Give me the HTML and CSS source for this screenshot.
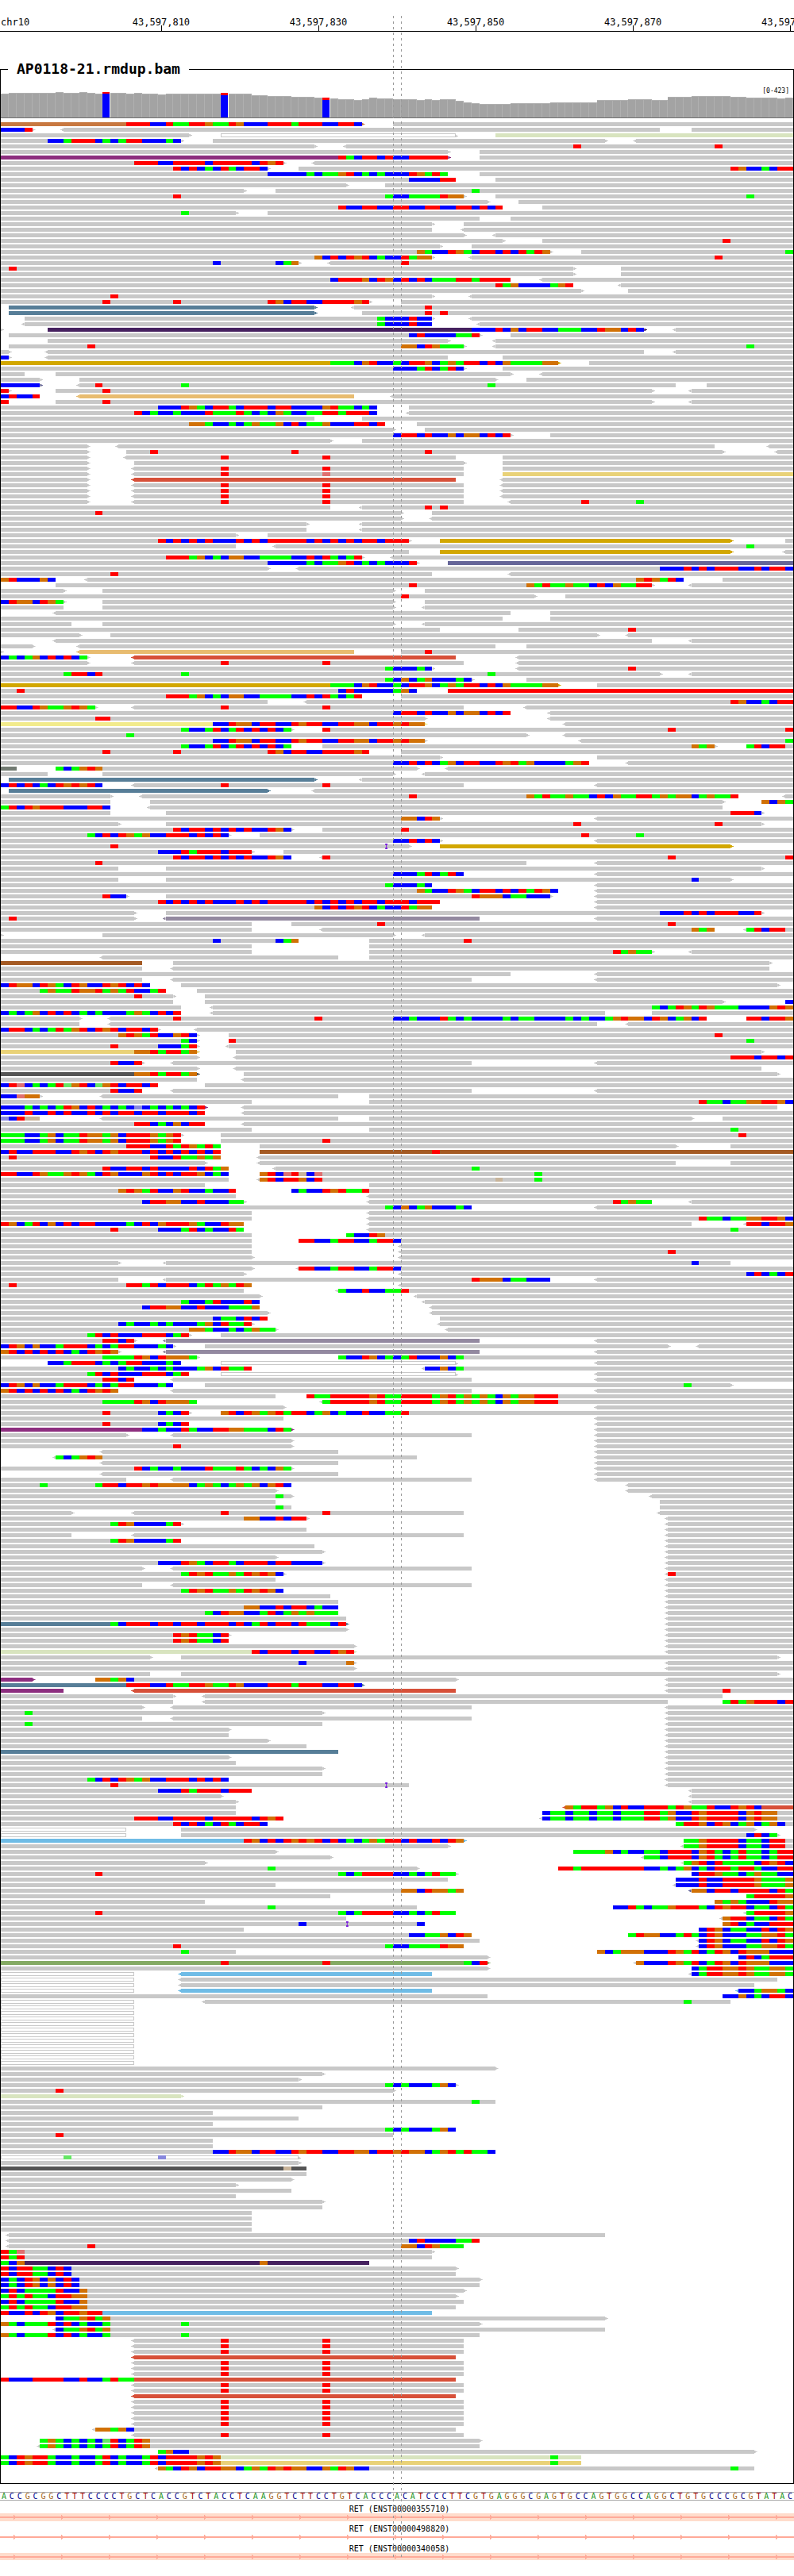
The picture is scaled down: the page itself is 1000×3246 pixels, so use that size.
FILE: index.html
```html
<!DOCTYPE html>
<html lang="en">
<head>
<meta charset="utf-8">
<title>AP0118-21.rmdup.bam</title>
<link rel="stylesheet" href="styles.css">
</head>
<body>
<main class="browser">
  <header class="ruler">
    <span class="chrom">chr10</span>
    <span class="tick" style="grid-column:21">43,597,810</span>
    <span class="tick" style="grid-column:41">43,597,830</span>
    <span class="tick" style="grid-column:61">43,597,850</span>
    <span class="tick" style="grid-column:81">43,597,870</span>
    <span class="tick" style="grid-column:101">43,597,890</span>
  </header>
  <fieldset class="track">
    <legend>AP0118-21.rmdup.bam</legend>
    <div class="coverage" id="coverage"><span class="range">[0-423]</span></div>
    <div class="reads" id="reads"></div>
  </fieldset>
  <div class="sequence" id="sequence"></div>
  <section class="genes">
    <div class="gene">
      <p>RET (ENST00000355710)</p>
      <svg class="strand" width="100%" height="10">
        <defs><pattern id="chevron" x="17" width="60" height="10" patternUnits="userSpaceOnUse"><path d="M0 2H1V3H2V4H3V6H2V7H1V8H0Z" fill="#ffaa99"/></pattern></defs>
        <rect width="100%" height="10" fill="#ffdccc"/><rect y="4" width="100%" height="2" fill="#ffaa99"/><rect width="100%" height="10" fill="url(#chevron)"/>
      </svg>
    </div>
    <div class="gene">
      <p>RET (ENST00000498820)</p>
      <svg class="strand" width="100%" height="10"><rect y="4" width="100%" height="2" fill="#ffaa99"/><rect width="100%" height="10" fill="url(#chevron)"/></svg>
    </div>
    <div class="gene">
      <p>RET (ENST00000340058)</p>
      <svg class="strand" width="100%" height="10"><rect width="100%" height="9" fill="#ffdccc"/><rect y="4" width="100%" height="2" fill="#ffaa99"/><rect width="100%" height="10" fill="url(#chevron)"/></svg>
    </div>
  </section>
  <div class="centre"></div>
</main>
<script src="script.js"></script>
</body>
</html>
```

FILE: styles.css
```css
* { box-sizing: border-box; }

body {
  margin: 0;
  background: #fff;
  color: #000;
  font-family: "DejaVu Sans Mono", "Liberation Mono", monospace;
  font-size: 12px;
}

.browser { position: relative; overflow: hidden; padding-bottom: 19px; }

.ruler, .coverage, .row, .sequence {
  display: grid;
  grid-template-columns: repeat(101, minmax(0, 1fr));
}

.ruler {
  height: 40px;
  padding-top: 21px;
  border-bottom: 1px solid #000;
  line-height: 14px;
}
.chrom { grid-area: 1 / 1 / 2 / 10; padding-left: 1px; }
.tick {
  grid-row: 1;
  justify-self: center;
  position: relative;
  white-space: nowrap;
}
.tick::after {
  content: "";
  position: absolute;
  left: 50%;
  bottom: 0;
  width: 1px;
  height: 7px;
  background: #000;
}

.track {
  margin: 36px 0 0;
  padding: 0 0 16px;
  border: 1px solid #000;
  min-width: 0;
}
.track legend {
  margin-left: 9px;
  padding: 0 11px;
  font-size: 18px;
  font-weight: bold;
  line-height: 22px;
}

.coverage {
  position: relative;
  height: 51px;
  align-items: end;
  border-bottom: 1px solid #707070;
}
.range {
  position: absolute;
  top: 11px;
  right: 5px;
  font-size: 8px;
  line-height: 12px;
}
.bar {
  grid-row: 1;
  background: #a3a3a3;
  border-top: 1px solid #b0b0b0;
  border-right: 1px solid #b0b0b0;
}
.snv { grid-row: 1; background: #00f; border-top: 3px solid #f00; margin-right: 1px; }

.reads { display: grid; grid-auto-rows: 5px; row-gap: 2px; padding-top: 5px; }
.row { grid-template-rows: 5px; }
.row > * { grid-row: 1; }

.read { position: relative; background: var(--c, #c8c8c8); }
.read.empty { width: 0; }
.fwd::after, .rev::before {
  content: "";
  position: absolute;
  top: 0;
  width: 4px;
  height: 5px;
  background: var(--c, #c8c8c8);
}
.fwd::after {
  left: 100%;
  clip-path: polygon(0 1px, 2px 1px, 2px 2px, 4px 2px, 4px 3px, 2px 3px, 2px 4px, 0 4px);
}
.rev::before {
  right: 100%;
  clip-path: polygon(4px 1px, 2px 1px, 2px 2px, 0 2px, 0 3px, 2px 3px, 2px 4px, 4px 4px);
}

.h { background: #fff; border: 1px solid #c8c8c8; }
.o { --c: #c87840; }
.l { --c: #d8e4bf; }
.p { --c: #8d2e7f; }
.b { --c: #577e98; }
.d { --c: #46215f; }
.y { --c: #d2a700; }
.e { --c: #e8bc70; }
.w { --c: #e9d278; }
.r { --c: #d75039; }
.v { --c: #666699; }
.f { --c: #ff0000; }
.q { --c: #f2eb8c; }
.m { --c: #727b72; }
.u { --c: #9389a0; }
.n { --c: #a45a23; }
.k { --c: #555555; }
.c { --c: #6fbce6; }
.j { --c: #84aa63; }

.base { position: relative; }
.A { background: #00ff00; }
.C { background: #0000ff; }
.G { background: #d17105; }
.T { background: #ff0000; }
.fade-a { background: #66e666; }
.fade-c { background: #8888dd; }
.fade-g { background: #c8b49a; }
.fade-t { background: #e07070; }

.ins {
  position: relative;
  width: 3px;
  height: 7px;
  margin-top: -1px;
  background: #7a1fdc;
  clip-path: polygon(0 0, 100% 0, 100% 2px, 2px 2px, 2px 5px, 100% 5px, 100% 100%, 0 100%, 0 5px, 1px 5px, 1px 2px, 0 2px);
}

.sequence {
  margin-top: 10px;
  border: solid #aaa;
  border-width: 1px 0;
  font-size: 10px;
  line-height: 9px;
  text-align: center;
}
.base-A { color: #1f961f; }
.base-C { color: #00008b; }
.base-G { color: #a8681a; }
.base-T { color: #a00000; }

.genes { padding-top: 1px; }
.gene p {
  margin: 0;
  padding: 5px 0 0 6px;
  font-size: 10px;
  line-height: 10px;
  text-align: center;
}
.strand { display: block; }

.centre {
  position: absolute;
  top: 20px;
  bottom: 24px;
  left: 49.5%;
  width: 11px;
  background:
    repeating-linear-gradient(#999 0 3px, transparent 3px 7px) left / 1px 100% no-repeat,
    repeating-linear-gradient(#999 0 3px, transparent 3px 7px) right / 1px 100% no-repeat;
}
```

FILE: script.js
```js
// Bar heights as [columns, height]; a third value is the height of the minor allele cap.
const depth = [[1,30],[6,31],[1,32],[2,31],[1,32],[1,31],[1,30],[1,32,2],[2,31],[1,30],[1,31],[2,30],[1,29],[7,30],
  [1,31,3],[3,30],[2,28],[3,27],[3,26],[1,25],[1,25,3],[1,24],[2,23],[1,22],[1,23],[1,25],[2,24],[3,23],[1,22],[1,23],
  [1,22],[2,23],[1,21],[1,19],[1,18],[4,17],[5,18],[6,19],[4,22],[3,23],[2,22],[3,26],[5,27],[2,26],[4,25],[1,24],[1,25]];

const reference = "ACCGCGGCTTTCCCCTGCTCACCGTCTACCTCAAGGTCTTCCTGTCACCC" +
  "ACATCCCTTCGTGAGGGCGAGTGCCAGTGGCCAGGCTGTGCCCGCGTATAC";

// One line per row. "a-b" is a read over columns a to b, "<" and ">" its strand tip,
// a trailing letter its colour; "n:ACGT" are mismatches from column n; "n|" an insertion.
// "xN " before a line repeats it N times.
const pileup = `
0-46>o 16:TTTCCTAATTGAATGCCCTTTATTTCCTTC 50-101
0-4> 0:CCCT <8-84 88-101
0-24> 28-58>h 63-101l
0-23> 6:CCATTTCACATTCCCAC 27-77> <81-101
0-40> <44-101 73:T 91:T
0-57> 61-101
0-57>p 43:TACTTCTCCTTTTT 61-101
0-36> 17:TTTCCTTTTCTTTTTCTGT <40-101
0-34> 22:TCTCACTACTTC 38-101 93:TGCCACTT
0-57 34:CCCCCACAAGTCACACCCTGATA 61-101
0-58 52:CCCCTT 63-101
0-44> 49-101
0-31> 35-101 60:A
0-59> 22:T 49:ACCAAAATGG 63-101 95:A
0-62> 66-101
0-64 43:TCCTTCCTTCCTTCCTTCTCT 69-101
0-30> 23:A 34-101
0-61 65-101
0-55> 59-101
0-55 <59-101
0-59> <63-101
0-64> 69-101 92:T
0-56> 60-101
0-70> 53:GACCTGACTTCTCTATG 74-101 100:A
0-55> 40:GCTCTGTCACCTAGG <60-101 91:T
0-38> 27:C 35:CAG <42-101 51:T
0-73> 1:T 79-101
0-73> 79-101
0-65 42:CTTTGCTGCTCTCAAATTATTTT <69-101
0-73 63:TAGCCCCAGT <79-101
0-74> 80-101
0-55> 14:T <60-101
0-47> 13:T 22:T 34:TGCTTCCTTTTGT 51-101
1-40>b <45-101 54:T
1-40>b 46-101 54:T 56:T
3-55> 48:ACCCTCC <60-101
<3-55 48:ACCCTCC <61-101
0-0> 6-82>d 60:CCCTCGCTTCCAAACCTGGCTC <86-101
1-61> 52:CTCCCCAAT 65-101
6-57> <63-101
1-59> 11:T 51:GGCTGAAA <63-101 95:A
0-1> <6-82 <86-101
0-1> 0:C <6-57 64-101
0-71>y 42:AAACGTCCACTTGCAGATTCTCGAAAAGG 75-101
0-59> 50:CCCATCATC 64-101
0-3 7-65> <69-101
0-5> 10-63> 67-101
0-5>v 0:CCCCC <10-86 12:T 23:A 62:A 90-101
0-1> 0:T 7-83> 13:T <88-101
0-5 0:CTCCT <10-45e <50-101
0-1 0:T 7-83> 13:T <88-101
0-48 20:CCCTGACTTACTTTCTTCCCCGTAACAC 52-101
0-48 17:TCACCACCCTAAATACACGACCAATTATTTC <52-101
0-40 46-101
0-49 24:GGACCACAGAAGCTCAAGCCCTTCT 53-101
0-50> 54-101
0-65> 50:CTTCTCCGCGGCTCT 70-101
0-42> 46-101
0-11> <15-91 <98-101
0-11> 16-92> 19:T 37:T 54:T <99-101
0-11> <16-58 28:T 41:T 64-101
0-11> 17-59> 64-101
0-11> <17-59 28:T 41:T 64-101
0-11> <17-59 28:T 41:t 64-101w
0-11> <17-58r <64-101
x3 0-11> <17-59 28:T 41:T <64-101
0-11> <17-59 28:T 41:T <65-101 74:T 81:A
0-42 <46-101 54:T 56:T
0-51> 12:T 55-101
0-51> <55-101
0-39> <46-101
0-39 <46-101
0-30> 34-101
0-52> 20:TCTCTCTCCCTCTCTTTTTCTCTCTCTTCTTT 56-93>y 100-101
0-30 <35-101 95:A
0-52 56-93>y <100-101
0-46> 21:TTTAGCACGGCCAAAACCTCTACAT <50-101
0-53> 34:CCCCCACAAGTCACACCCT 57-101v
0-34> <38-101 84:CCCTCTCTTTCCTCTTC
0-55 14:T <65-101
0-7 0:GTCCCGC <11-87 81:GTGATC 92-101
7-83> 52:T 67:GATAAGAACTCGAATT <88-101
0-8> 13-50> 54-101
0-68> 51:T 72-101
0-8> 0:CTGGCTGA 13-50> 54-101
0-8 13-50> <54-101
<7-65 70-101
0-64 70-101
0-9 13-50> <54-101
0-56 66-101 80:T
0-10> 14-76> <80-101
<7-83 <88-101
0-4> <10-63 67-101
0-0> <10-45e 51-101 54:T
0-11> 0:CACAGCTCTCA <17-58r <66-101
0-11> <17-59 28:T 41:T <66-101
0-55> 49:ACCCAC <66-101 80:T
0-84> 8:ATTCT 23:A 62:A <88-101
0-60> 49:ACGCAGCCCAC 67-101
0-71>y 42:AAACGTCCACTTGCAGATTCTCGAAAAGG 76-101
0-53 2:T 43:CTCCCCCAGC 57-101f
0-46 21:TTTAGCACGGCCAAAACCTCTACAT 51-101
0-34 <39-101 93:TGCCACTT
0-12> 0:TTCCTGAAGTGA <17-59 28:T 41:T <67-101
0-65 50:CTTCTCCGCGGCTCT <70-101
0-54> 12:TT <70-101
0-54>q 27:CCTGGCTTCCTGTTCCTTGGCTTGTGG <72-101
0-37> 23:ACCATCATCTCTCA 41-101 41:T 85:T 100:T
0-67> 16:A <72-101
0-54> 27:CCTGGCTTCCTGTTCCTTGGCTTGTGG <74-101 100:A
0-37 23:ACCATCATCTCTCA 41-91> 88:GAG 95-101 95:ATCTT
0-47 13:T 22:T 34:TGCTTCCTTTTGT 51-101
0-56> 76-101
0-75 50:CCTCTCAGCTTCCTGTAGCCCCAGT <80-101
0-2m 7-53> 7:ACAGTG <57-101
0-6 13-50> <54-101
1-40>b <46-101
0-13 0:CTCTCACTGTGTC <17-59 28:T 41:T <76-101
1-34>b <40-101
0-14> <18-94 52:T 67:GATAAGAACTCGAATTAGAGGCAGAAT <100-101
0-14 19-92> 97-101 97:GCGA
0-14 0:ATCTGTTTCCCTTC <19-92
0-14 21-97> 93:TTTC
0-56> 51:GGCTG <76-101
0-15> 21-97> 73:T 91:T
0-37> 22:TCTTCTCTCTCCTGC 41-101 51:T
0-29> 11:ACTCTGAGCCTTTCTCTC 33-101 74:T 81:A
0-56> 50:CCTCTC <76-101
0-52> 14:T 49| 56-93>y
0-32> 20:CCCTATTTCTTT 36-101
0-37 22:TCTTCTCTCTCCTGC <41-101 41:T 85:T 100:T
0-67 12:T <76-101
0-15 21-97>
0-59 50:CCCATCATC <76-101
0-15 21-93> 88:C
0-55 49:ACCCAC <76-101
0-71 53:GACCTGACTTCTCTATGC <76-101
0-16> 13:TCC 21-70> 60:TGGGCAACCC <76-101
0-56 20:TCTCTCTCCCTCTCTTTTTCTCTCTCTTCTTTCTTT <76-101
0-55 40:GCTCTGTCACCTAGG <76-101
0-17> 21-97> 84:CCCTCTCTTTCCT
0-17> 1:T <21-61u <76-101
0-32 37-101 48:T 85:T
0-32 <41-91 88:GAG <95-101 95:ATCTT
0-0> 13-50> <54-101
0-38 27:C 35:CAG 47-101 59:T
0-32 47-101
0-32 47-83> 78:TAGAA <88-101
<13-43 47-101
0-18n 22-98>
0-18 <22-98
0-65 <76-101
0-18 <22-60 <76-101
0-19 0:CTGGCTGACTGCCTGTCTC 23-99>
0-21 5:AGAATGGTAGATCCAT 25-101
0-22> 17:T 26-101
0-22 26-92> 100-101 100:C
0-23 <27-101 83:ACATGATGAAACCCCGTG
0-23 0:CACAGCTCTCACACCCAGACTCT <27-77 83-101
0-10> <14-90 22:T 40:T 50:CCACCCTACACCCCACAACCCCACACCAGTGGCTGCAGCT 95-101 95:TTCTTG
0-10 <14-76 <80-101
0-20> 0:CTTCACATAGTCTGTCTTCT <25-101
0-25> 15:GTGATCCGTC 29-101 91:T
0-25> 23:AC 29-101 29:T 95:A
0-25> 14:T 20:CCCAT <29-101
0-25>w 17:GGTATTAG 30-97>
0-25> <30-101 93:TTTCTTCT
0-18> 14:TCCT <22-60 <76-101
0-25> <30-97
0-25>k 17:GGTATTAG 31-99>
0-25 <31-101
0-20 0:CTtCACATaGTCaGTCTTCT 26-101
0-18 14:TCCT <22-60 <76-101
0-5> 0:CCtGG <13-43 47-101
0-32 47-101 89:TAACAAGGTTGC
0-26>p 0:CCCACACATGCTCACACcCACACACT <31-99
0-26 0:CCCTCCTCTCCTCTCTTCTTCTTTCT <31-101
0-5 0:cCTgg <13-43 47-88> 92-101
0-26 17:TTCACGCTT <31-101
0-32 47-101 93:A
0-23> 0:AAACCAGCAATGGAGCTTTGAGT 28-101 94:T
0-23 0:AAACCAGCAATGGAGCTTTGAGT 28-101 41:T
0-28 16:TTTCCTATGATA 33-86> 93-101
0-28 0:CTCCTTTCCTGTCTGTTTCTCTCTCTCT 33-101n 55:T
0-28 1:T 19:TCCTAAGAG <33-101
0-26> <33-86 93-101
0-29 13:TCCTTCTCCCCTCTAG <35-101 60:A
0-29 0:TTCCTGAAGTGACTGCCCGTCTCTTGCAC 33-101 33:GTCtTgCt 68:A
0-29 <33-101 33:GTCTTGCT 63:g 68:A
0-26 47-101
0-30 15:GTGATCCGTCCACCT 37-101 37:CACCTGTAAT
0-30 <47-101
0-31> 18:CTTGGCCTCCCAA <47-83 78:TAGAA <88-101
0-60 49:ACGCAGCCCAC <76-101
0-32 <47-101
0-32 <47-101 89:TAACAAGGTTGC
0-31 0:TGCATCGCTCTTCCCCACTCGTTTGACCTGG <47-88 <95-101 95:TTCTTG
0-31 14:T 20:CCCATCACCTA <47-101 93:A
0-32 44-101 44:ACCTG
0-32 38-101 38:TTCCATTCCATTC
0-32 <51-101
0-32 <51-101 85:T
0-32> <51-101
0-15> <21-93 88:C
0-32> <38-101 38:TTCCATTCCATTC
0-31> <51-101 95:CTCACT
0-15 <21-70 60:TGGGCAACCC <76-101
0-32 1:T 16:TTATCTTTCATAGATG <51-101
0-31 <43-101 43:ACCTCCAAT
0-33> <53-101
0-33 23:ACCATCCCTC <54-101
0-33 18:CTTGGCCTCCCAAAG <55-101
0-34> <55-101
0-34 27:CAACTCT 56-101
0-32> 15:CACCACACCCAGCTAAT <56-101
0-35> 24:GGACCACAGAA <57-101
0-24> 11:ATCTCCCTTTCAT 28-101
0-17> 13:TTCT <21-61u <76-101
0-22> 0:CTGCGCCATTTCACATTCCCAC 26-85> <89-101
0-15> 0:GTCTCTCTCACTGTG <21-61u <76-101
0-25> 13:AAAATGCTGGGA 43-101 43:ACCTGCACATCCCGCA
6-23 6:CCATTTCACATTCCCAC 28-58>h <76-101
0-32 15:CACCACACCCAGCTAAT <54-101 54:CCGCA
0-24 11:ATCTCCCTTTCAT 28-58>h <76-101
0-17 13:TTCT <22-60 <76-101
0-22 0:CTGCGCCATTTCACATTCCCAC 26-93> 87:A
0-15 0:GTCTCTCTCACTGTG <22-60 <76-101
0-35 39-101 39:TAATTTTTGTAATTTTAGTAGAGACGAGGTTT
0-25 13:AAAATGCTGGGA <41-101 41:ATTTTTGTAATTTTAGTAGAGACGAGGTTT
0-36> <76-101
0-24> 13:T 20:CACT 28-101 28:GTCTGAGTATTCAGCACCTCCAAT
0-36 <76-101
0-24 13:T 20:CACT <76-101
0-37>p 18:CCACCTACCTTGGAAACTA <76-101
0-16> <22-60 <76-101
0-37> <76-101
0-37> 22:T <76-101
<13-43 <76-101
<7-53 7:ACAGTG <76-101
<13-43 <76-101
0-37> 17:TCACCACCCTAAATACACGA <76-101
<13-43 <76-101
0-16 <22-60 <76-101
0-37 5:A 12:ATTCTTGTGGGGCAGACAGAGCGTC <80-101
0-35> <80-101
0-37> 35:A <83-101
0-35 84-101
0-37 35:A 84-101
0-9> <17-59 28:T 41:T <84-101
0-39> 31:GGCCTCTT <85-101
0-23> 14:ATGCCCCAT <85-101
0-39 <85-101
0-9 <17-59 <85-101
0-23 14:ATGCCCCAT <85-101
0-40 <85-101
0-41> <85-101
0-35> <85-101
0-41> 20:CCCTGACTTACTTTCTTCCCC <85-101
0-18> <22-60 <85-101
0-36> 23:ATGTAAGATGTGC <85-101 85:T
0-35 <85-101
0-18 <22-60 <85-101
0-36 23:ATGTAAGATGTGC <85-101
0-42 <85-101
0-43 <85-101
0-43 31:GGCCTCTTCACC <85-101
0-43 26:ACTGGCCATCAGAGAAA <85-101
0-44 <85-101
0-44>b 14:ACTTTCTTCTTCTTTCTCATCTTCTAAACT <85-101
0-44> <85-101
0-29> 22:TGTAACT <85-101
0-29 22:TGTAACT <85-101
0-45> <85-101
0-45>l 32:TCTTTCTTCCTGT <85-101
0-19> 23-99>
0-45> 38:C 44:G <85-101
0-45> <85-101
0-19 23-99>
0-4>p 12-58> 12:GGAGC <85-101
0-46>b 16:TTTCCTAATTGAATGCCCTTTATTTCCTTC <85-101
0-8p <17-58r <85-101 92:T
0-22> <26-92
0-22 <26-85 92-101 92:ATAGTTTCT
0-18> <22-60 <85-101
0-41> 3:A <85-101
0-18 <22-60 <85-101
0-41 3:A <85-101
0-29> <85-101
0-29 <85-101
0-34> <85-101
0-39 <85-101
0-43b <85-101
0-29> <85-101
0-30 <85-101
0-41> <85-101
0-41 <85-101
0-29 11:ACTCTGAGCCTTTCTCTC <85-101
0-52 14:T 49| <85-101
0-32 20:CCCTATTTCTTT <88-101
0-28> <88-101
0-30> <88-101
0-30 <72-101r 72:GATTAGCTCCTTTATGAATCCTGTC
0-30 69-101 69:CAACAACAACAAATTAGCCTGTTTTCGTGG
0-36 17:TTTCCTTTTCTTTTTCTGT <69-101 69:CAACAACAACAAATTAGCCTGTTTTCGTGG
0-34 22:TCTCACTACTTC 86-101 86:ATTGCTGCAGCAGC
0-16h 23-96>
0-16h 23-99> 95:CTCA
0-59>c 31:TGCTCTGTGTCTCACAGATTCTCCTCTG 87-101 87:AAGTTTTCAACTT
0-57> <87-101 87:AAGTTTTCAACTT
0-35> 73-101 73:AAAAGCACCAACTTTCGTACATAACATT
0-42> <82-101 82:AACTTTCGTACATAACATT
0-26> <87-101l 87:AGTCTAAAACTGTC
0-53> 34:A 71-101 71:TTATTTTTTTTCCACAGCACTTATTACCTT
0-58> 12:T 43:ACATTTTCCACATAA 88-101 88:CTTGAACAGAACC
0-57 86-101 86:CCCTCCTTTTGAAAG
0-35 <86-101 86:CCCTCCTTTTGAAAG
0-59 51:GGCTGGAG <88-101v 88:GGCTTCTTTTCTA
0-42 95-101 95:ATTTTG
0-26 91-101 91:GAGACCCTGG
0-53 34:A 78-101 78:CCTACAAGTTTACTGTTCAACTA
0-58 12:T 43:ACATTTTCCACATAA <95-101 95:ATTTTG
0-44 <92-101 92:GTTCAACTA
0-54 38:C 44| 53:C 92-101 92:GTCACCTTT
0-31 89-101 89:CTGCAACCTCTG
0-60 52:CCAAGCTG 80-101 80:ATGGCCATACTGCCCAAGGTA
0-61 <89-101 89:CTGCAACCTCTG
0-59 22:T 49:ACCAAAATGG <89-101 89:CTGCCCAAGGTA
0-30 23:A 76-101 76:GCAGGGCCCTGATCATGCTGGGCCC
0-62> 94-101 94:CTCATTT
0-62>j 28:T 41:T 59:ACT <81-101 81:GCCCTGATCATGCTGGGCCC
0-62> 88-101 88:CATTGGTGAAGGA
0-17h <23-55c <88-101 88:CATTGGTGAAGGA
0-17h <23-99
0-17h <23-96
0-17h <23-55c <94-101c 94:CCAGGAC
0-62 92-101 92:CCGCACTTC
0-17h <26-93 87:A
x11 0-17h
0-63>
0-41>
0-38>
0-58> 49:ACACCCAGC
0-50> 7:T
0-23>l
0-63 60:A
0-41
0-27
0-38
0-27
0-58 49:ACACCCAGC
0-50 7:T
x2 0-27
0-63 27:CCTGGCTTCCTGTTCCTTGGCTTGTGGCAGTATAAC
0-38>h 8:a 20:c
0-38>
0-39k 36:g
0-39
0-37>
0-30>
0-37
0-30
0-41>
0-41
x4 0-32
<1-77
<1-61 52:CTCCCCAAT
<1-59 11:T 51:GGCTGAAA
0-55> 0:TAt
0-55 0:TAT
0-47d 0:ACG 33:G
0-58> 0:TCTTAACTC
0-58 0:TCTTAACTC
0-61> 0:CACTGCGCTC
0-61 0:CACTGCGCTC
0-59> 0:CTCAAAATCCG
0-58> 0:ATATAACTTGG
0-59 0:CTCAAAATCCG
0-58 0:ATATAACTTGG
0-55c 0:TCCTCTGCTTGTT
7-77> 7:CAAGTAG
0-61> 0:GACAAATCTCACCA 23:A
<7-77 7:CAAGTAG
0-61 0:GACAAATCTCACCA 23:A
x3 <17-59 28:T 41:T
<17-58r
x3 <17-59 28:T 41:T
0-58r 0:TCCCTTTTCCTCCATAA
x2 <17-59 28:T 41:T
<17-58r
x5 <17-59 28:T 41:T
<12-58 12:GGAGC
<17-59 28:T 41:T
5-61> 5:AGACACACaTCATG
<5-61 5:AGACACACATCATG
20-96> 20:AGCC
0-74l 0:ACTGTTACCACCATCACCATCTTTTGTG 70:A
0-74w 0:ACTGTTACCACCATCACCATCTTTTGTG 70:A
<20-96 20:GACTGCTTGGCAGATGTGGCCGATGCC 93:A
`;

function cell(className, from, to) {
  return `<i class="${className}" style="grid-column:${from + 1}/${Math.max(to, from + 1) + 1}"></i>`;
}

function drawRow(line) {
  let html = "";
  for (const token of line.split(" ")) {
    let m;
    if ((m = token.match(/^(<?)(\d+)-(\d+)(>?)([a-z]?)$/))) {
      const from = +m[2], to = +m[3];
      const names = ["read", m[1] && "rev", m[4] && "fwd", m[5], from === to && "empty"];
      html += cell(names.filter(Boolean).join(" "), from, to);
    } else if ((m = token.match(/^(\d+):(\w+)$/))) {
      let at = +m[1];
      for (const run of m[2].match(/(.)\1*/g)) {
        const base = run[0];
        html += cell("base " + (base < "a" ? base : "fade-" + base), at, at + run.length);
        at += run.length;
      }
    } else if ((m = token.match(/^(\d+)\|$/))) {
      html += cell("ins", +m[1], +m[1] + 1);
    }
  }
  return `<div class="row">${html}</div>`;
}

let rows = "";
for (const line of pileup.trim().split("\n")) {
  const m = line.match(/^x(\d+) (.*)$/);
  rows += m ? drawRow(m[2]).repeat(+m[1]) : drawRow(line);
}
document.getElementById("reads").innerHTML = rows;

let bars = "", column = 1;
for (const [count, height, cap] of depth) {
  for (let i = 0; i < count; i++, column++) {
    bars += `<i class="${cap ? "snv" : "bar"}" style="grid-column:${column};height:${height}px${cap ? ";border-top-width:" + cap + "px" : ""}"></i>`;
  }
}
document.getElementById("coverage").insertAdjacentHTML("beforeend", bars);

document.getElementById("sequence").innerHTML =
  [...reference].map(b => `<span class="base-${b}">${b}</span>`).join("");
```
